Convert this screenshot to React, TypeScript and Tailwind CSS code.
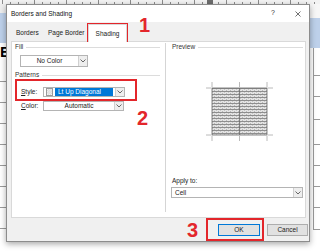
function Chevron() {
  return (
    <svg width="6" height="4" viewBox="0 0 6 4">
      <polyline points="0.5,0.5 3,3 5.5,0.5" fill="none" stroke="#444" strokeWidth="0.8" />
    </svg>
  )
}

function DropButton() {
  return (
    <div className="w-[9px] h-full border-l border-[#d0d0d0] bg-[#eeeeee] flex items-center justify-center">
      <Chevron />
    </div>
  )
}

function Header({ label }: { label: string }) {
  return (
    <div className="h-[8px] flex items-center gap-[3px] pr-[2px]">
      <span className="text-[#333]">{label}</span>
      <div className="flex-1 h-px bg-[#dcdcdc]" />
    </div>
  )
}

function Ruler() {
  const ticks = []
  for (let x = 2; x < 320; x += 8) ticks.push(x)
  return (
    <svg width="320" height="4" viewBox="0 0 320 4" className="block bg-[#f3f3f3]">
      {ticks.map((x) => (
        <rect key={x} x={x} y={x % 32 === 2 ? 0 : 2} width="1" height={x % 32 === 2 ? 4 : 2} fill="#8c8c8c" />
      ))}
      <rect x="207" y="0" width="6" height="4" fill="#6d6d6d" />
    </svg>
  )
}

function PreviewGrid() {
  return (
    <svg width="69" height="60" viewBox="0 0 69 60" className="block">
      <defs>
        <pattern id="stripes" width="4" height="3" patternUnits="userSpaceOnUse">
          <rect width="4" height="3" fill="#e4e4e4" />
          <rect width="4" height="1" fill="#8e8e8e" />
          <rect x="1" y="2" width="1" height="1" fill="#b8b8b8" />
          <rect x="3" y="1" width="1" height="1" fill="#c4c4c4" />
        </pattern>
      </defs>
      <rect x="7" y="6" width="55" height="47" fill="url(#stripes)" stroke="#6a6a6a" strokeWidth="0.8" />
      <line x1="34.5" y1="6" x2="34.5" y2="53" stroke="#6a6a6a" strokeWidth="0.8" />
      <g stroke="#a8a8a8" strokeWidth="0.8">
        <line x1="7" y1="0" x2="7" y2="5" />
        <line x1="34.5" y1="0" x2="34.5" y2="5" />
        <line x1="62" y1="0" x2="62" y2="5" />
        <line x1="1" y1="6" x2="6" y2="6" />
        <line x1="63" y1="6" x2="68" y2="6" />
        <line x1="7" y1="54" x2="7" y2="59" />
        <line x1="34.5" y1="54" x2="34.5" y2="59" />
        <line x1="62" y1="54" x2="62" y2="59" />
        <line x1="1" y1="53" x2="6" y2="53" />
        <line x1="63" y1="53" x2="68" y2="53" />
      </g>
    </svg>
  )
}

function Swatch() {
  return (
    <svg width="7" height="8" viewBox="0 0 7 8" className="block border border-[#9a9a9a]">
      <rect width="7" height="8" fill="#f4f4f4" />
      <g stroke="#9c9c9c" strokeWidth="0.6">
        <line x1="0" y1="3" x2="3" y2="0" />
        <line x1="0" y1="6" x2="6" y2="0" />
        <line x1="1" y1="8" x2="7" y2="2" />
        <line x1="4" y1="8" x2="7" y2="5" />
      </g>
    </svg>
  )
}

export default function App() {
  return (
    <div className="relative w-[320px] h-[252px] overflow-hidden bg-white font-['Liberation_Sans',Arial,sans-serif] text-[6.5px] text-[#222]">
      {/* spreadsheet behind the dialog */}
      <div className="flex flex-col h-full">
        <Ruler />
        <div className="flex-1 flex">
          <div className="w-[6px] flex flex-col">
            <div className="h-[9px] bg-[#eeeeee]" />
            <div className="h-[30px] bg-[#bdd0ea]" />
            <div className="h-[15px] text-[15px] font-bold leading-none text-black pt-[1px] whitespace-nowrap">E</div>
            <div className="h-[24px] border-b border-[#9a9a9a]" />
            <div className="h-[21px] border-b border-[#9a9a9a]" />
            <div className="h-[21px] border-b border-[#9a9a9a]" />
            <div className="h-[21px] border-b border-[#9a9a9a]" />
            <div className="h-[21px] border-b border-[#9a9a9a]" />
            <div className="h-[21px] border-b border-[#9a9a9a]" />
            <div className="h-[21px] border-b border-[#9a9a9a]" />
            <div className="h-[21px] border-b border-[#9a9a9a]" />
          </div>
          <div className="flex-1" />
          <div className="w-[10px] flex flex-col">
            <div className="h-[14px] bg-[#f7f7f7]" />
            <div className="h-[30px] bg-[#bdd0ea]" />
            <div className="h-[28px] border-b border-[#9a9a9a] ml-[3px] border-l" />
            <div className="h-[21px] border-b border-[#9a9a9a] ml-[3px] border-l" />
            <div className="h-[23px] border-b border-[#9a9a9a] ml-[3px] border-l" />
            <div className="h-[25px] border-b border-[#9a9a9a] ml-[3px] border-l" />
            <div className="h-[21px] border-b border-[#9a9a9a] ml-[3px] border-l" />
            <div className="h-[21px] border-b border-[#9a9a9a] ml-[3px] border-l" />
            <div className="h-[21px] border-b border-[#9a9a9a] ml-[3px] border-l" />
            <div className="h-[22px] border-b border-[#9a9a9a] ml-[3px] border-l" />
          </div>
        </div>
      </div>

      {/* dialog */}
      <div className="absolute left-[6px] top-[4px] w-[304px] h-[238px] border border-[#8c8c8c] bg-[#f0f0f0] flex flex-col shadow-[0_2px_6px_rgba(0,0,0,0.35)]">
        <div className="h-[17px] bg-white flex items-center pl-[4px] pr-[8px]">
          <span className="flex-1 text-[#111]">Borders and Shading</span>
          <span className="text-[7px] text-[#333] mr-[20px]">?</span>
          <svg width="6" height="6" viewBox="0 0 6 6">
            <path d="M0.5 0.5 L5.5 5.5 M5.5 0.5 L0.5 5.5" stroke="#333" strokeWidth="0.7" />
          </svg>
        </div>

        <div className="flex-1 flex flex-col">
          <div className="relative z-10 flex items-end h-[20px] pt-[2px] -mb-px ml-[4px]">
            <div className="w-[34px] h-[18px] flex items-center pl-[5px]">Borders</div>
            <div className="w-[43px] h-[18px] flex items-center pl-[3px]">Page Border</div>
            <div className="w-[39px] h-[18px] flex items-center justify-center bg-white border border-b-0 border-[#d9d9d9]">Shading</div>
          </div>

          <div className="ml-[4px] w-[295px] h-[177px] bg-white border border-[#d9d9d9] flex">
            {/* left column */}
            <div className="w-[150px] pl-[3px] flex flex-col">
              <div className="mt-[1px]">
                <Header label="Fill" />
              </div>
              <div className="mt-[4px] ml-[5px] w-[68px] h-[12px] border border-[#b4b4b4] flex">
                <div className="flex-1 flex items-center justify-center">No Color</div>
                <DropButton />
              </div>
              <div className="mt-[4px]">
                <Header label="Patterns" />
              </div>
              <div className="mt-[8px] h-[10px] flex items-center">
                <span className="w-[22px] ml-[6px]">
                  <span className="underline">S</span>tyle:
                </span>
                <div className="w-[82px] h-full border border-[#b4b4b4] flex items-center">
                  <div className="ml-[2px]">
                    <Swatch />
                  </div>
                  <div className="ml-[2px] w-[58px] h-[8px] bg-[#0078d7] text-white flex items-center pl-[3px]">Lt Up Diagonal</div>
                  <div className="flex-1" />
                  <DropButton />
                </div>
              </div>
              <div className="mt-[4px] h-[10px] flex items-center">
                <span className="w-[22px] ml-[6px]">
                  <span className="underline">C</span>olor:
                </span>
                <div className="w-[81px] h-full border border-[#b4b4b4] flex">
                  <div className="flex-1 flex items-center justify-center">Automatic</div>
                  <DropButton />
                </div>
              </div>
            </div>

            {/* preview column */}
            <div className="flex-1 flex flex-col">
              <div className="ml-[3px] mt-[1px] h-[169px] border-l border-[#d5d5d5] flex flex-col">
                <div className="h-[8px] flex items-center pl-[6px] pr-[2px] gap-[3px]">
                  <span className="text-[#333]">Preview</span>
                  <div className="flex-1 h-px bg-[#dcdcdc]" />
                </div>
                <div className="mt-[31px] ml-[39px]">
                  <PreviewGrid />
                </div>
                <div className="mt-[35px] h-[8px] flex items-center pl-[6px]">Apply to:</div>
                <div className="mt-[2px] ml-[5px] w-[132px] h-[11px] border border-[#b4b4b4] flex">
                  <div className="flex-1 flex items-center pl-[3px]">Cell</div>
                  <DropButton />
                </div>
              </div>
            </div>
          </div>

          <div className="flex-1 flex items-center justify-end pr-[1px] gap-[7px]">
            <div className="w-[42px] h-[12px] border border-[#0078d7] bg-[#e1e1e1] flex items-center justify-center">OK</div>
            <div className="w-[41px] h-[12px] border border-[#adadad] bg-[#e1e1e1] flex items-center justify-center">Cancel</div>
          </div>
        </div>
      </div>

      {/* annotations */}
      <div className="absolute left-[87px] top-[23px] w-[41px] h-[19px] border-2 border-[#e3262b]" />
      <div className="absolute left-[15px] top-[79px] w-[122px] h-[22px] border-2 border-[#e3262b]" />
      <div className="absolute left-[206px] top-[218px] w-[58px] h-[23px] border-2 border-[#e3262b]" />
      <div className="absolute left-[139px] top-[15px] text-[20px] font-bold leading-none text-[#e3262b]">1</div>
      <div className="absolute left-[137px] top-[108px] text-[20px] font-bold leading-none text-[#e3262b]">2</div>
      <div className="absolute left-[187px] top-[220px] text-[20px] font-bold leading-none text-[#e3262b]">3</div>
    </div>
  )
}
